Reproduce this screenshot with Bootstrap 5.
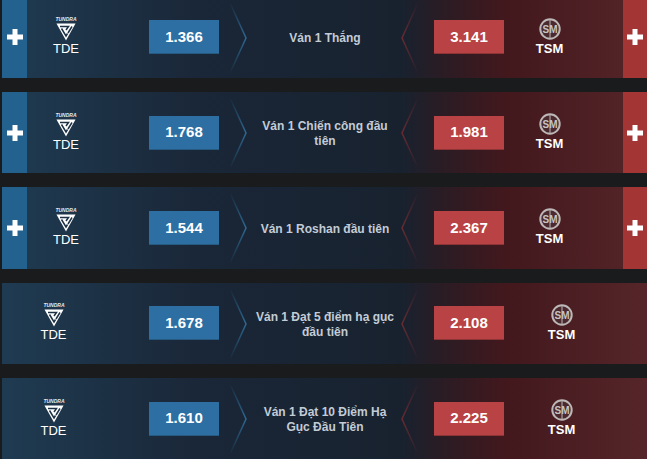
<!DOCTYPE html>
<html lang="vi">
<head>
  <meta charset="UTF-8" />
  <title>Kèo Ván 1</title>
  <link href="https://cdn.jsdelivr.net/npm/bootstrap@5.3.0/dist/css/bootstrap.min.css" rel="stylesheet" />
  <style>
    html, body { height: 459px; overflow: hidden; }
    body { background: #1a1b1d; font-family: "Liberation Sans", Arial, sans-serif; }
    .market-list { margin-top: -3.33px; padding-left: 2px; gap: 14px; }
    .market-row {
      height: 81.33px;
      background: linear-gradient(90deg, #1f3b52 0, #1a2738 30%, #18222f 62%, #2a1c24 68%, #42181d 78%, #552529 100%);
    }
    .add-btn { width: 25px; border: 0; padding: 0; flex: none; }
    .add-home { background: #23618f; }
    .add-away { background: #a33535; width: 24px; }
    .team-home { flex: 1; width: 0; margin-right: 44px; padding-bottom: 3px; }
    .left-side { width: 147px; }
    .team-away { flex: 1; padding-right: 28px; padding-bottom: 2px; }
    .team-name { font-size: 13px; line-height: 13px; color: #fff; margin-top: 2px; }
    .team-home .team-name { font-weight: 400; margin-top: 1px; }
    .team-away .team-name { font-weight: 700; }
    .odd-box {
      width: 70px; height: 34px; flex: none; padding-top: 1px;
      color: #fff; font-size: 15px; font-weight: 700;
    }
    .odd-home { background: #2d6fa3; border-bottom: 1px solid #275a80; }
    .odd-away { background: #b84244; border-bottom: 1px solid #8c3436; }
    .market-name {
      width: 215px; flex: none; padding: 3px 35px 0 32px; position: relative;
      color: #c3ccd6; font-size: 12px; font-weight: 700; line-height: 15px; text-align: center;
    }
    .chev { position: absolute; top: 6px; width: 18px; height: 70px; }
    .chev-l { left: 10px; }
    .chev-r { right: 15px; }
  </style>
</head>
<body>

  <svg width="0" height="0" class="d-block">
    <defs>
      <linearGradient id="fadeBlue" x1="0" y1="0" x2="0" y2="1">
        <stop offset="0" stop-color="#2d6a94" stop-opacity="0"/>
        <stop offset=".5" stop-color="#2d6a94"/>
        <stop offset="1" stop-color="#2d6a94" stop-opacity="0"/>
      </linearGradient>
      <linearGradient id="fadeRed" x1="0" y1="0" x2="0" y2="1">
        <stop offset="0" stop-color="#6b2a30" stop-opacity="0"/>
        <stop offset=".5" stop-color="#6b2a30"/>
        <stop offset="1" stop-color="#6b2a30" stop-opacity="0"/>
      </linearGradient>
      <symbol id="plus" viewBox="0 0 16 16">
        <path fill="#fff" d="M5.500 0h5v5.500H16v5h-5.500V16h-5v-5.500H0v-5h5.500z"/>
      </symbol>
      <symbol id="tde" viewBox="0 0 22 25">
        <text x="11" y="4.500" text-anchor="middle" font-family="Liberation Sans" font-size="5" font-weight="700" font-style="italic" fill="#e8e8e8" textLength="21">TUNDRA</text>
        <path fill="#fff" d="M1.500 7.500h19L11 24.500z"/>
        <path fill="none" stroke="#1c3146" stroke-width="1.500" d="M5 10.500h8.500l-2.500 3.500M6.500 12.500l4.500 7.500 1.500-2.500M17 10.500l-4 6.500"/>
      </symbol>
      <symbol id="tsm" viewBox="0 0 22 22">
        <circle cx="11" cy="11" r="9.700" fill="#4a2a2e" stroke="#bdb7b7" stroke-width="2"/>
        <path stroke="#bdb7b7" stroke-width="1" d="M11 2v18"/>
        <text x="11" y="15" text-anchor="middle" font-family="Liberation Sans" font-size="11.500" font-weight="700" fill="#c9c4c4" textLength="15" lengthAdjust="spacingAndGlyphs">SM</text>
      </symbol>
    </defs>
  </svg>

  <div class="market-list d-flex flex-column" id="markets"></div>

  <script>
    // du lieu keo
    const markets = [
      { name: 'Ván 1 Thắng', home: '1.366', away: '3.141', add: true },
      { name: 'Ván 1 Chiến công đầu tiên', home: '1.768', away: '1.981', add: true },
      { name: 'Ván 1 Roshan đầu tiên', home: '1.544', away: '2.367', add: true },
      { name: 'Ván 1 Đạt 5 điểm hạ gục đầu tiên', home: '1.678', away: '2.108', add: false },
      { name: 'Ván 1 Đạt 10 Điểm Hạ Gục Đầu Tiên', home: '1.610', away: '2.225', add: false }
    ];

    const plusBtn = side => `<button type="button" class="add-btn add-${side} d-flex align-items-center justify-content-center"><svg width="16" height="16"><use href="#plus"/></svg></button>`;

    document.getElementById('markets').innerHTML = markets.map(m => `
      <div class="market-row d-flex align-items-center">
        <div class="left-side h-100 d-flex align-items-stretch flex-shrink-0">
          ${m.add ? plusBtn('home') : ''}
          <div class="team-home d-flex flex-column align-items-center justify-content-center">
            <svg width="22" height="25"><use href="#tde"/></svg>
            <div class="team-name">TDE</div>
          </div>
        </div>
        <div class="odd-box odd-home d-flex align-items-center justify-content-center">${m.home}</div>
        <div class="market-name h-100 d-flex align-items-center justify-content-center">
          <svg class="chev chev-l" viewBox="0 0 18 70"><path d="M1 0l16 35L1 70" fill="none" stroke="url(#fadeBlue)" stroke-width="1.500"/></svg>
          <span>${m.name}</span>
          <svg class="chev chev-r" viewBox="0 0 18 70"><path d="M17 0L1 35l16 35" fill="none" stroke="url(#fadeRed)" stroke-width="1.500"/></svg>
        </div>
        <div class="odd-box odd-away d-flex align-items-center justify-content-center">${m.away}</div>
        <div class="team-away d-flex flex-column align-items-center justify-content-center">
          <svg width="22" height="22"><use href="#tsm"/></svg>
          <div class="team-name">TSM</div>
        </div>
        ${m.add ? plusBtn('away').replace('d-flex', 'h-100 d-flex') : ''}
      </div>`).join('');
  </script>
  <script src="https://cdn.jsdelivr.net/npm/bootstrap@5.3.0/dist/js/bootstrap.bundle.min.js"></script>
</body>
</html>
